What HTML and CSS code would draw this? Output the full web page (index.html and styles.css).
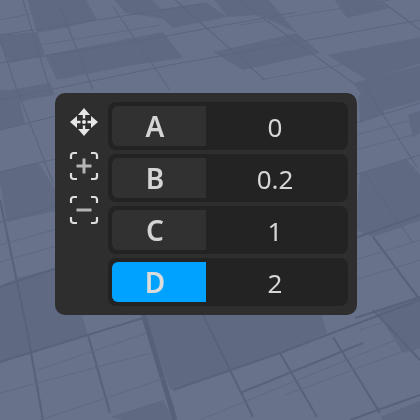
FILE: index.html
```html
<!DOCTYPE html>
<html lang="en">
<head>
<meta charset="utf-8">
<title>Gizmo panel</title>
<link rel="stylesheet" href="styles.css">
</head>
<body>
<svg class="floor" viewBox="0 0 420 420" aria-hidden="true">
  <defs><filter id="soft"><feGaussianBlur stdDeviation="0.6"/></filter></defs>
  <g filter="url(#soft)">
    <g class="tile">
      <polygon points="27,-2 85,-2 97,20 65,28 37,33"/>
      <polygon points="-2,35 37,32 45,55 10,63 -2,40"/>
      <polygon points="45,55 163,32 183,58 133,65 57,80"/>
      <polygon points="113,-2 150,-2 172,20 125,13"/>
      <polygon points="153,10 207,3 227,17 173,28"/>
      <polygon points="213,-2 267,-2 297,33 260,15 227,17"/>
      <polygon points="213,52 297,33 320,53 243,70"/>
      <polygon points="327,55 422,37 422,63 367,80"/>
      <polygon points="333,-2 373,-2 390,8 347,18"/>
      <polygon points="-2,92 50,83 55,95 -2,105"/>
      <polygon points="353,83 422,65 422,100 375,113"/>
      <polygon points="-2,90 17,90 25,123 -2,130"/>
      <polygon points="-2,172 38,162 60,197 60,210 7,222"/>
      <polygon points="-2,287 17,278 60,267 60,330 -2,330"/>
      <polygon points="358,97 367,88 385,113 360,123"/>
      <polygon points="408,115 422,110 422,130 413,138"/>
      <polygon points="360,173 407,160 422,177 422,220 373,237 355,230"/>
      <polygon points="377,310 422,297 422,330 388,330"/>
      <polygon points="-2,362 32,352 88,335 80,308 -2,308"/>
      <polygon points="143,308 320,308 327,333 280,353 170,390"/>
      <polygon points="110,417 163,400 175,422 130,422"/>
      <polygon points="380,417 422,400 422,422 385,422"/>
      <polygon points="380,317 403,353 422,348 422,308"/>
    </g>
    <g class="far">
      <path d="M23 0L50 90M60 7L93 90M113 7L170 90M175 0L265 80M238 0L353 83M380 0L420 30"/>
      <path d="M0 40L17 90L53 183M367 90L417 167M365 173L413 243"/>
      <path d="M0 35L97 20L207 3M0 63L133 42L297 12M0 100L170 65L420 20M0 130L60 115M0 172L60 158M0 222L60 205M355 123L420 103M355 175L420 155"/>
    </g>
    <g class="near">
      <path d="M0 200L27 330L43 420M88 335L110 413M203 315L253 417M280 353L317 417M333 337L380 413M373 237L420 300M373 310L420 360"/>
      <path d="M0 287L60 267M355 238L420 215M355 318L420 297M0 362L143 318M173 390L280 353L340 330L420 300M240 393L363 343M350 420L420 395"/>
    </g>
    <path class="thick" d="M142 310L175 420"/>
    <g class="minor">
      <path d="M0 393L150 353M37 370L147 333M40 420L165 378M200 420L420 330M285 395L420 345M0 330L60 312M360 330L420 310"/>
      <path d="M0 20L60 8M40 45L160 25M60 70L160 52M240 25L420 -5M260 80L420 50M0 245L60 228M0 262L60 245M355 260L420 240M355 280L420 260M355 135L420 118M355 150L420 133"/>
    </g>
  </g>
</svg>
<main class="panel">
  <div class="tools">
    <svg class="icon" viewBox="0 0 28 28" aria-hidden="true">
      <path class="fill" d="M14 0L20 7H8ZM14 28L8 21H20ZM0 14L7 8V20ZM28 14L21 20V8Z"/>
      <path class="stroke" d="M14 7V10.500M14 17.500V21M7 14H10.500M17.500 14H21"/>
      <circle class="fill" cx="14" cy="14" r="2"/>
    </svg>
    <svg class="icon" viewBox="0 0 28 28" aria-hidden="true">
      <path class="bracket" d="M1 7V3.5A2.5 2.5 0 0 1 3.5 1H7M21 1H24.500A2.500 2.500 0 0 1 27 3.500V7M27 21V24.500A2.500 2.500 0 0 1 24.500 27H21M7 27H3.500A2.500 2.500 0 0 1 1 24.500V21"/>
      <path class="sign" d="M14 6.500V21.500M6.500 14H21.500"/>
    </svg>
    <svg class="icon" viewBox="0 0 28 28" aria-hidden="true">
      <path class="bracket" d="M1 7V3.5A2.5 2.5 0 0 1 3.500 1H7M21 1H24.500A2.500 2.500 0 0 1 27 3.500V7M27 21V24.500A2.500 2.500 0 0 1 24.500 27H21M7 27H3.500A2.500 2.500 0 0 1 1 24.500V21"/>
      <path class="sign" d="M6.500 14H21.500"/>
    </svg>
  </div>
  <div class="rows">
    <div class="row"><span class="label">A</span><span class="value">0</span></div>
    <div class="row"><span class="label">B</span><span class="value">0.2</span></div>
    <div class="row"><span class="label">C</span><span class="value">1</span></div>
    <div class="row"><span class="label active">D</span><span class="value">2</span></div>
  </div>
</main>
</body>
</html>
```
FILE: styles.css
```css
html, body {
  margin: 0;
  width: 420px;
  height: 420px;
  overflow: hidden;
}

body {
  position: relative;
  box-sizing: border-box;
  padding: 93px 0 0 55px;
  background: #68738b;
  font-family: "Noto Sans", "Open Sans", sans-serif;
}

.floor {
  position: absolute;
  left: 0;
  top: 0;
  width: 420px;
  height: 420px;
}

.tile { fill: #5f6a82; }

.far, .near, .thick, .minor { fill: none; }
.far { stroke: #5b667d; stroke-width: 1.2; }
.near { stroke: #58637a; stroke-width: 2.2; }
.thick { stroke: #566178; stroke-width: 5; }
.minor { stroke: #5e6981; stroke-width: 1; }

.panel {
  position: relative;
  box-sizing: border-box;
  display: flex;
  width: 302px;
  height: 222px;
  padding: 9px;
  gap: 4px;
  background: #2e2e2e;
  border-radius: 10px;
  filter: blur(0.6px);
}

.tools {
  display: flex;
  flex-direction: column;
  align-items: center;
  width: 40px;
  padding-top: 6px;
  gap: 16px;
}

.icon {
  width: 28px;
  height: 28px;
  overflow: visible;
}

.fill { fill: #e6e6e6; }
.stroke { fill: none; stroke: #e6e6e6; stroke-width: 2.4; }
.bracket { fill: none; stroke: #dedede; stroke-width: 2.2; }
.sign { fill: none; stroke: #b4b4b4; stroke-width: 3; }

.rows {
  display: flex;
  flex-direction: column;
  flex: 1;
  gap: 4px;
}

.row {
  display: flex;
  align-items: center;
  box-sizing: border-box;
  height: 48px;
  padding: 4px;
  background: #232323;
  border-radius: 8px;
}

.label {
  display: flex;
  align-items: center;
  justify-content: center;
  box-sizing: border-box;
  width: 94px;
  height: 40px;
  padding-right: 8px;
  background: #313131;
  border-radius: 6px 0 0 6px;
  color: #d4d4d4;
  font-size: 28px;
  font-weight: 600;
}

.label.active {
  background: #00a2ff;
  color: #dcdcdc;
}

.value {
  flex: 1;
  padding-top: 2px;
  text-align: center;
  color: #d6d6d6;
  font-size: 26px;
  line-height: 40px;
}
```
